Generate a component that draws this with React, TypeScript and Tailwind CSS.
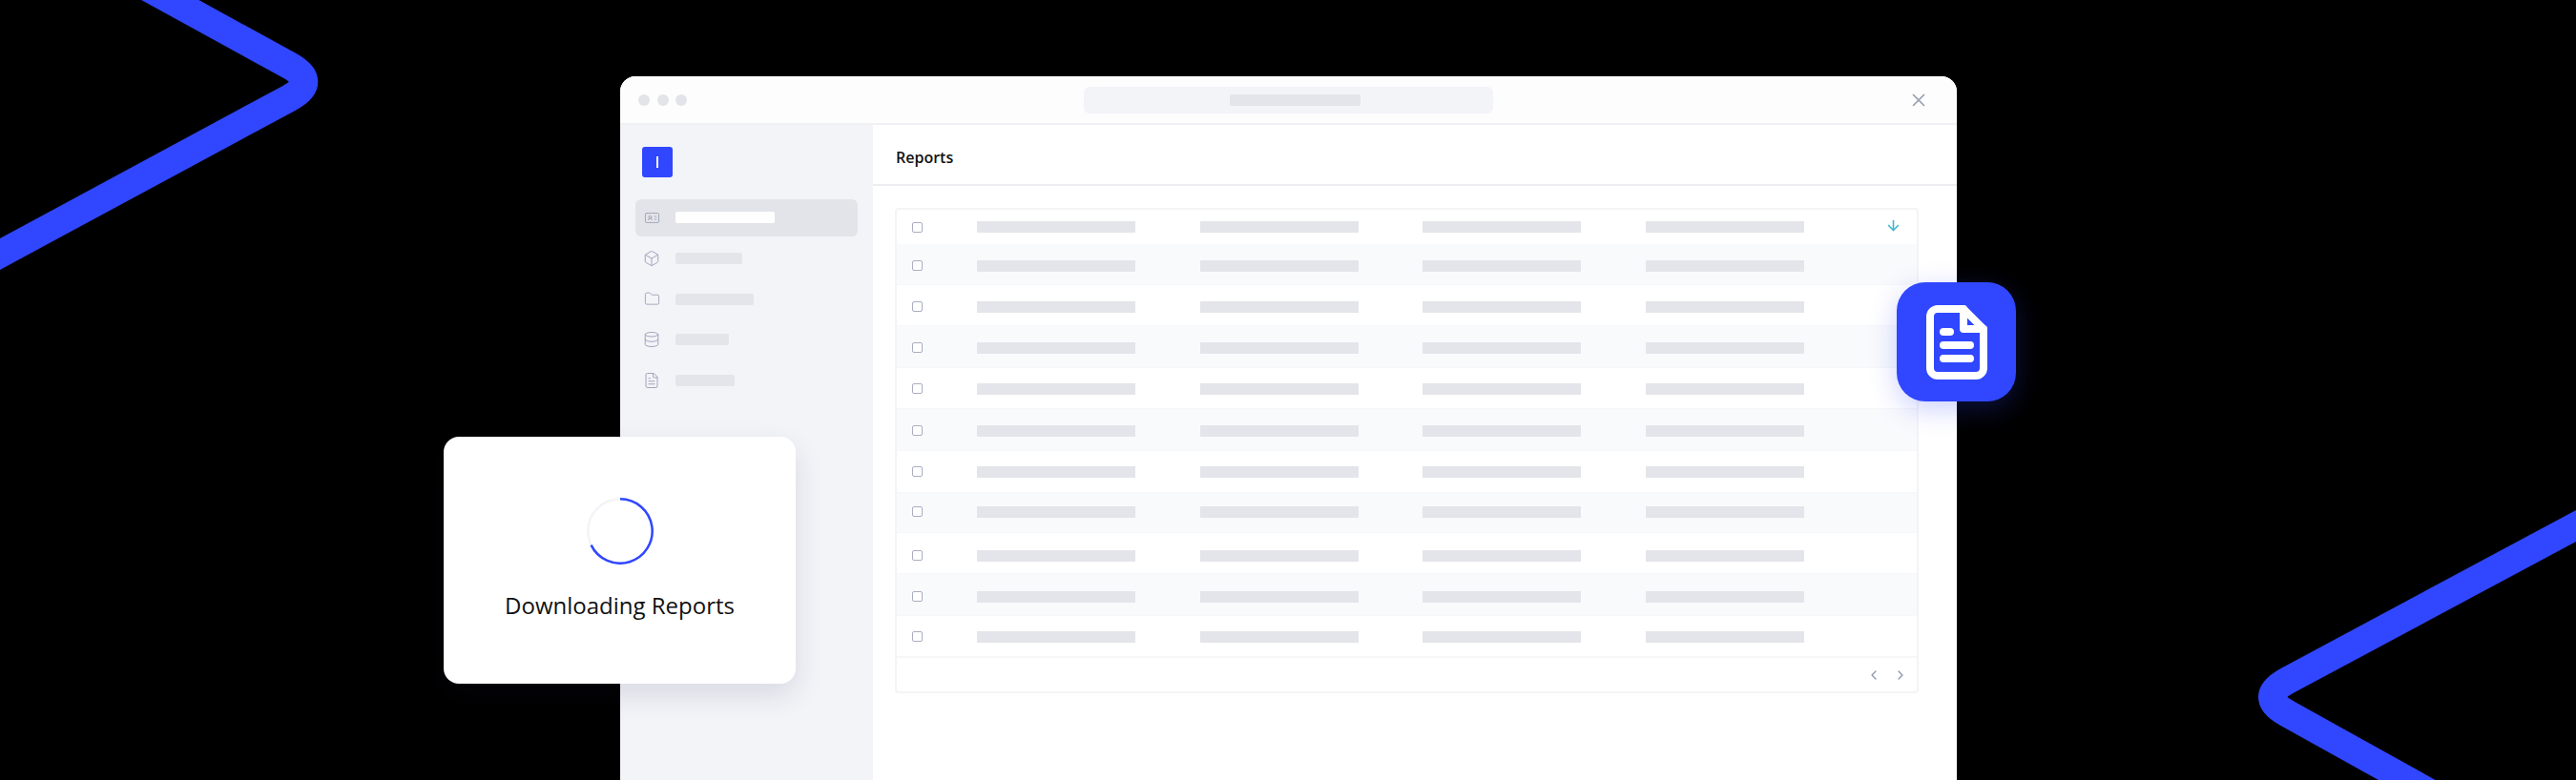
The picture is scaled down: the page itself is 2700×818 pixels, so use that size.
import { ArrowDown, Box, ChevronLeft, ChevronRight, Database, FileText, Folder, IdCard, X } from 'lucide-react';

const BLUE = '#3047ff';

const navItems = [
  { icon: IdCard, size: 17, width: 'w-[104px]', active: true },
  { icon: Box, size: 18, width: 'w-[70px]' },
  { icon: Folder, size: 17, width: 'w-[82px]' },
  { icon: Database, size: 18, width: 'w-[56px]' },
  { icon: FileText, size: 18, width: 'w-[62px]' },
];

// row heights are not perfectly even in the mock
const rows = [
  'h-[43px] pt-[17px]',
  'h-[43px] pt-[17px]',
  'h-[44px] pt-[17px]',
  'h-[43px] pt-[16px]',
  'h-[44px] pt-[17px]',
  'h-[44px] pt-[16px]',
  'h-[42px] pt-[14px]',
  'h-[43px] pt-[18px]',
  'h-[44px] pt-[18px]',
  'h-[43px] pt-[16px]',
];

const Bars = () => (
  <div className="flex gap-[67.5px] ml-[57px]">
    <div className="w-[166px] h-[11.5px] bg-[#e4e5ea]" />
    <div className="w-[166px] h-[11.5px] bg-[#e4e5ea]" />
    <div className="w-[166px] h-[11.5px] bg-[#e4e5ea]" />
    <div className="w-[166px] h-[11.5px] bg-[#e4e5ea]" />
  </div>
);

const Check = () => <div className="w-[11px] h-[11px] rounded-[2px] border border-[#a9adc0] bg-white shrink-0" />;

const Sidebar = () => (
  <aside className="w-[265px] shrink-0 bg-[#f3f4f8] pt-[23px] px-4">
    <div className="w-[32px] h-[32px] ml-[7px] rounded-[3px] bg-[#3047ff] flex items-center justify-center">
      <div className="w-[2px] h-[12px] bg-white" />
    </div>
    <nav className="mt-[22.5px] flex flex-col gap-[3.75px]">
      {navItems.map((item, i) => {
        const Icon = item.icon;
        return (
          <div key={i} className={`h-[39px] rounded-[6px] flex items-center pl-[9px] ${item.active ? 'bg-[#e3e4e9]' : ''}`}>
            <div className="w-[16px] flex justify-center shrink-0">
              <Icon size={item.size} strokeWidth={1.3} className="text-[#9da3b8] shrink-0" />
            </div>
            <div className={`${item.width} h-[12px] rounded-[2px] ml-[17px] ${item.active ? 'bg-white' : 'bg-[#e4e5ea]'}`} />
          </div>
        );
      })}
    </nav>
  </aside>
);

const ReportsTable = () => (
  <div className="mt-[23px] ml-[23px] w-[1073px] h-[509px] rounded-[4px] border-2 border-[#f4f4f7] flex flex-col">
    <div className="h-[36px] shrink-0 flex items-start pt-[12px] pl-[16px] relative">
      <div className="mt-[1px]">
        <Check />
      </div>
      <Bars />
      <ArrowDown size={17} strokeWidth={2.2} className="absolute right-[16px] top-[8px] text-[#3db5cf]" />
    </div>
    {rows.map((cls, r) => (
      <div
        key={r}
        className={`${cls} shrink-0 flex items-start pl-[16px] border-b border-[#f6f7f9] ${r % 2 === 0 ? 'bg-[#f9fafc]' : 'bg-white'}`}
      >
        <Check />
        <Bars />
      </div>
    ))}
    <div className="flex-1 border-t border-[#f6f7f9] flex items-center justify-end pr-[9px] gap-[12px]">
      <ChevronLeft size={16} strokeWidth={1.8} className="text-[#8a90a8]" />
      <ChevronRight size={16} strokeWidth={1.8} className="text-[#8a90a8]" />
    </div>
  </div>
);

const DownloadCard = () => (
  <div className="absolute left-[-185px] top-[378px] w-[369px] h-[259px] rounded-[16px] bg-white shadow-[0_12px_30px_rgba(30,35,70,0.12)] flex flex-col items-center pt-[64px]">
    <svg width="70" height="70" viewBox="0 0 70 70">
      <circle cx="35" cy="35" r="33.7" fill="none" stroke="#f3f4f8" strokeWidth="2.5" />
      <path d="M35 1.3 A33.7 33.7 0 1 1 4.6 49.6" fill="none" stroke={BLUE} strokeWidth="2.5" />
    </svg>
    <div className="mt-[27px] text-[24px] leading-[32px] text-[#111111]">Downloading Reports</div>
  </div>
);

const DocBadge = () => (
  <div className="absolute left-[1338px] top-[216px] w-[125px] h-[125px] rounded-[30px] bg-[#3047ff] shadow-[0_8px_28px_rgba(48,71,255,0.25)]">
    <svg width="125" height="125" viewBox="0 0 125 125" fill="none" stroke="white" strokeWidth="8" strokeLinecap="round" strokeLinejoin="round">
      <path d="M70 28 H43 A8 8 0 0 0 35 36 V90 A8 8 0 0 0 43 98 H83 A8 8 0 0 0 91 90 V49 Z" />
      <path d="M70 28 V49 H91" />
      <path d="M49 52 H56" />
      <path d="M49 66 H77" />
      <path d="M49 80 H77" />
    </svg>
  </div>
);

export default function App() {
  return (
    <div className="relative w-[2700px] h-[818px] overflow-hidden bg-black font-['Open_Sans',sans-serif]">
      <svg className="absolute inset-0" width="2700" height="818" viewBox="0 0 2700 818" fill="none" stroke={BLUE} strokeWidth="29">
        <path d="M120 -32 L303 68.5 Q334.6 85.8 303 102.9 L-40 288" />
        <path d="M2740 530 L2397 714 Q2366 731 2397 748 L2600 861" />
      </svg>

      <div className="relative ml-[650px] w-[1401px] h-[818px] pt-[80px]">
        <div className="relative w-full h-full rounded-t-[16px] bg-white flex flex-col">
          <div className="h-[51px] shrink-0 rounded-t-[16px] bg-[#fdfdfd] border-b-2 border-[#f0f0f5] flex items-center px-[19px] relative">
            <div className="flex gap-[7.5px]">
              <div className="w-[12px] h-[12px] rounded-full bg-[#e3e4e9]" />
              <div className="w-[12px] h-[12px] rounded-full bg-[#e3e4e9]" />
              <div className="w-[12px] h-[12px] rounded-full bg-[#e3e4e9]" />
            </div>
            <div className="ml-[416px] w-[429px] h-[28px] rounded-[6px] bg-[#f3f4f8] flex items-center pl-[153px]">
              <div className="w-[137px] h-[12px] rounded-[2px] bg-[#e4e5ea]" />
            </div>
            <X size={22} strokeWidth={1.9} className="ml-auto mr-[10px] text-[#9a9fb3]" />
          </div>
          <div className="flex flex-1 min-h-0">
            <Sidebar />
            <main className="flex-1 min-w-0">
              <div className="h-[64px] border-b-2 border-[#eeeef2] flex items-center pt-[6px] pl-[24px] text-[16px] font-semibold text-[#111111]">
                Reports
              </div>
              <ReportsTable />
            </main>
          </div>
          <DownloadCard />
          <DocBadge />
        </div>
      </div>
    </div>
  );
}
